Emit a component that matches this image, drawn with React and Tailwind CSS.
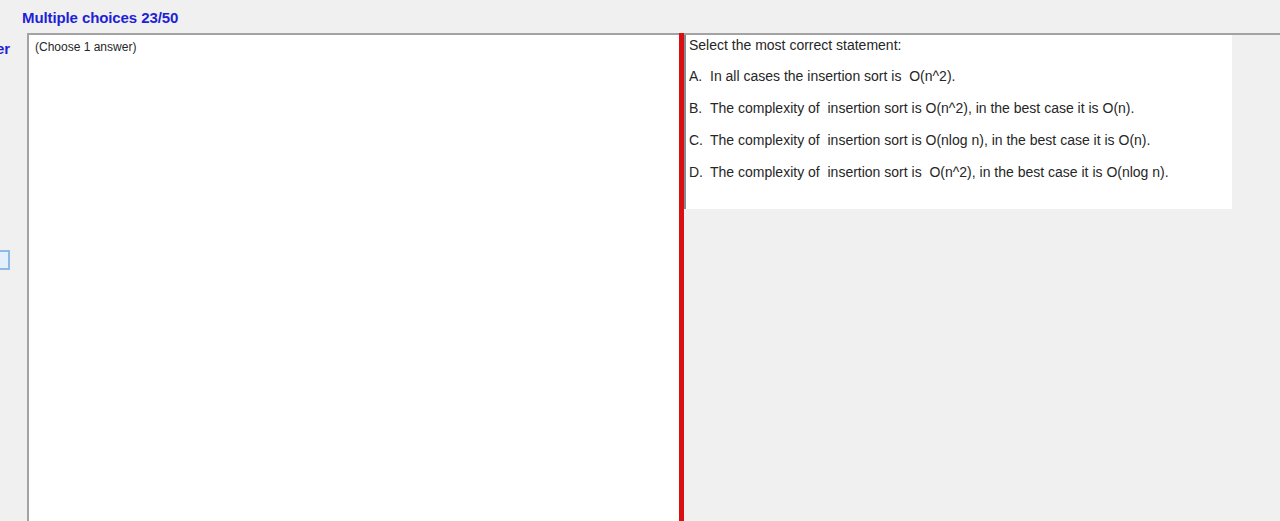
const options = [
  { key: "A.", text: "In all cases the insertion sort is  O(n^2)." },
  { key: "B.", text: "The complexity of  insertion sort is O(n^2), in the best case it is O(n)." },
  { key: "C.", text: "The complexity of  insertion sort is O(nlog n), in the best case it is O(n)." },
  { key: "D.", text: "The complexity of  insertion sort is  O(n^2), in the best case it is O(nlog n)." },
];

const App = () => {
  return (
    <div className="h-[521px] w-[1280px] overflow-hidden bg-[#f0f0f0] font-['Liberation_Sans',Arial,sans-serif] text-[#262626] flex flex-col">
      <div className="h-[33px] pl-[22px] pt-[8px] text-[15px] leading-[20px] font-bold text-[#1f1fd6] tracking-[-0.1px]">
        Multiple choices 23/50
      </div>

      <div className="flex flex-1 min-h-0">
        {/* clipped side column */}
        <div className="w-[27px] shrink-0 overflow-hidden flex flex-col">
          <div className="mt-[5px] ml-[-44px] text-[15px] font-bold text-[#1f1fd6] whitespace-nowrap">Answer</div>
          <div className="mt-[189px] ml-[-10px] w-[20px] h-[20px] border-2 border-[#8fb8e6] bg-[#e3f0fb]" />
        </div>

        {/* answer panel */}
        <div className="w-[652px] shrink-0 bg-white border-t-2 border-l-2 border-[#a3a3a3] pl-[6px] pt-[3px]">
          <div className="text-[12px]">(Choose 1 answer)</div>
        </div>

        {/* divider */}
        <div className="w-[5px] shrink-0 bg-[#d90f12]" />

        {/* question area */}
        <div className="flex-1 border-t-2 border-[#a3a3a3]">
          <div className="w-[548px] h-[174px] bg-white border-l-2 border-[#8a8a8a] pl-[3px] text-[14px]">
            <div className="h-[25px] pt-[1px] leading-[18px]">Select the most correct statement:</div>
            {options.map((o) => (
              <div key={o.key} className="h-[32px] flex items-center whitespace-pre">
                <span className="w-[21px]">{o.key}</span>
                <span>{o.text}</span>
              </div>
            ))}
          </div>
        </div>
      </div>
    </div>
  );
};

export default App;
